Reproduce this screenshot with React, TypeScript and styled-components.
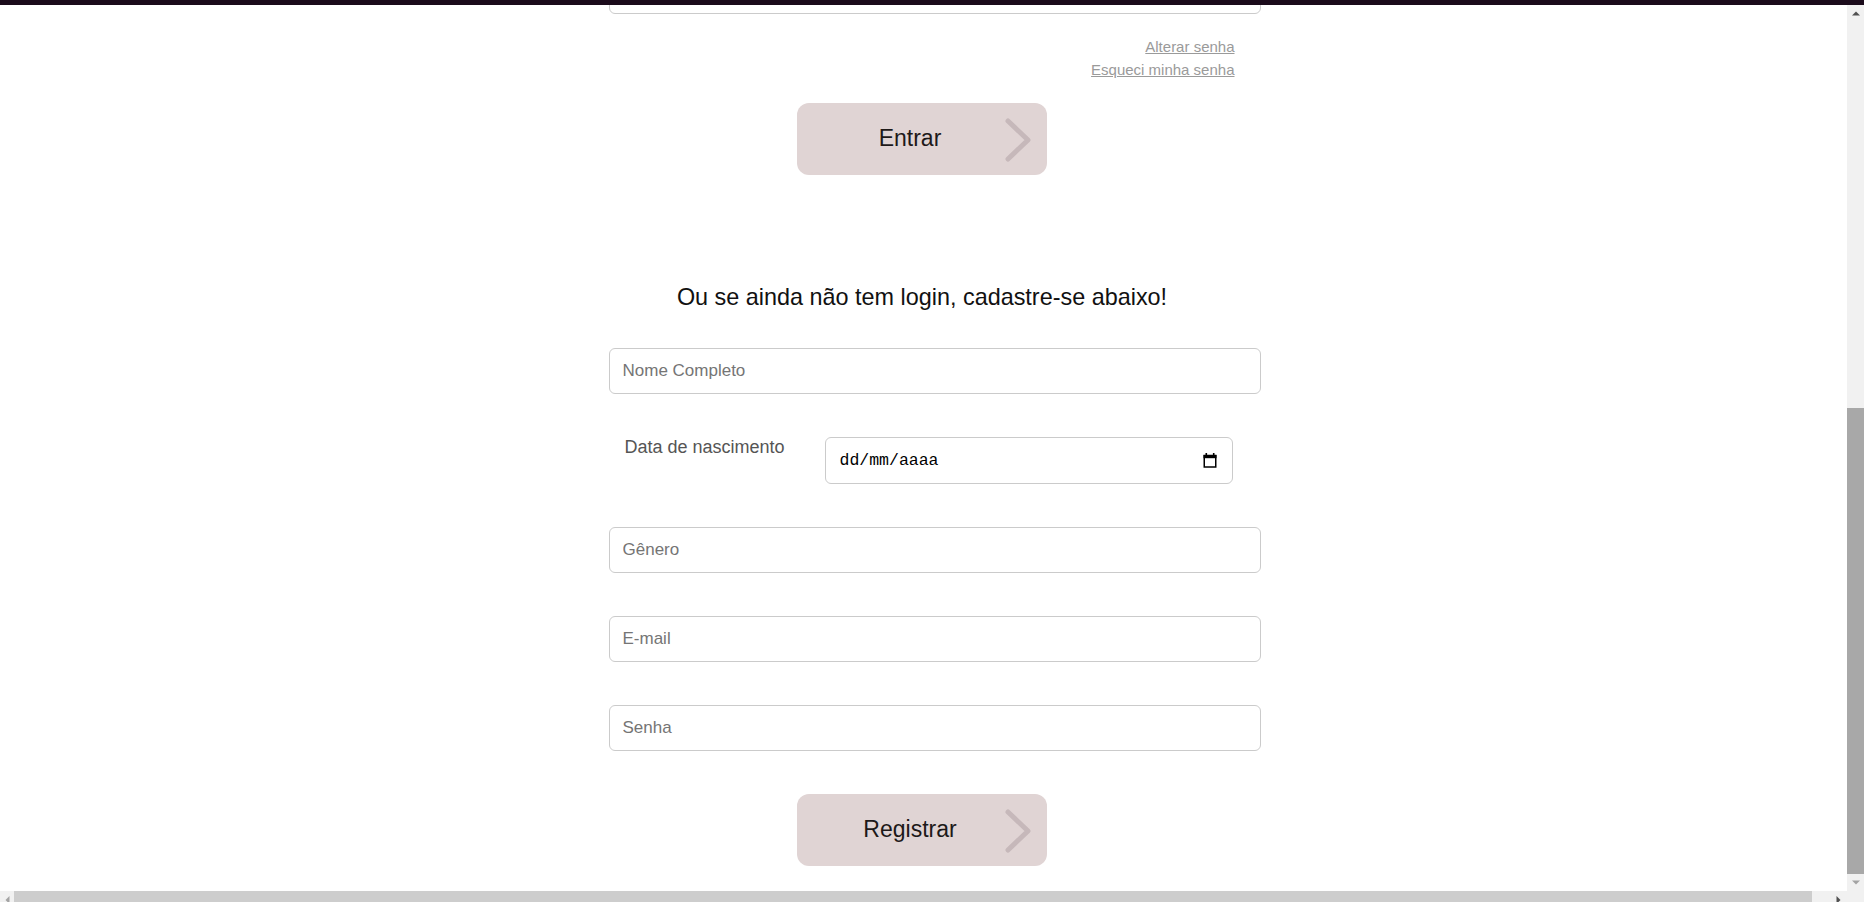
import React from "react";
import styled, { createGlobalStyle } from "styled-components";

const GlobalStyle = createGlobalStyle`
  html, body {
    margin: 0;
    padding: 0;
    height: 100%;
    overflow: hidden;
    background: #ffffff;
  }
  body {
    font-family: "Liberation Sans", Arial, sans-serif;
  }
  #root {
    height: 100%;
  }
  *, *::before, *::after {
    box-sizing: border-box;
  }
`;

const Window = styled.div`
  display: flex;
  flex-direction: column;
  width: 1864px;
  height: 902px;
  overflow: hidden;
`;

const TopStrip = styled.div`
  flex: 0 0 5px;
  background: #1b0b1b;
`;

const Middle = styled.div`
  flex: 1;
  min-height: 0;
  display: flex;
`;

const Viewport = styled.main`
  flex: 1;
  min-width: 0;
  overflow: hidden;
  display: flex;
  flex-direction: column;
  justify-content: flex-end;
  align-items: flex-start;
  background: #ffffff;
`;

const Page = styled.div`
  width: 1869px;
  flex-shrink: 0;
  display: flex;
  flex-direction: column;
  padding-bottom: 25px;
`;

const FormColumn = styled.div<{ $top?: number; $gap?: number }>`
  width: 652px;
  margin: ${(p) => p.$top ?? 0}px auto 0;
  display: flex;
  flex-direction: column;
  gap: ${(p) => p.$gap ?? 0}px;
`;

const TextInput = styled.input`
  display: block;
  width: 100%;
  height: 46px;
  margin: 0;
  padding: 0 13px;
  border: 1px solid #cbcbcb;
  border-radius: 6px;
  background: #ffffff;
  font-family: "Liberation Sans", Arial, sans-serif;
  font-size: 17px;
  color: #222;
  outline: none;

  &::placeholder {
    color: #757575;
  }
`;

const LinkStack = styled.div`
  margin-top: 21px;
  padding-right: 26px;
  display: flex;
  flex-direction: column;
  align-items: flex-end;
`;

const SmallLink = styled.a`
  font-size: 15px;
  line-height: 23px;
  color: #9a9a9a;
  text-decoration: underline;
  cursor: pointer;
`;

const ButtonRow = styled.div<{ $top: number }>`
  margin-top: ${(p) => p.$top}px;
  padding-right: 25px;
  display: flex;
  justify-content: center;
`;

const ArrowButton = styled.button`
  width: 250px;
  height: 72px;
  border: none;
  border-radius: 12px;
  background: #e0d4d4;
  padding: 0 14px 0 20px;
  display: grid;
  grid-template-columns: 1fr 30px;
  align-items: center;
  font-family: "Liberation Sans", Arial, sans-serif;
  font-size: 23px;
  color: #1d1919;
  cursor: pointer;
`;

const ButtonLabel = styled.span`
  text-align: center;
  padding-bottom: 1px;
`;

const Heading = styled.h2`
  margin: 109px 0 0;
  padding-right: 25px;
  text-align: center;
  font-size: 23.4px;
  font-weight: 400;
  line-height: 27px;
  color: #111111;
`;

const DateRow = styled.div`
  height: 47px;
  padding: 0 28px 0 16px;
  display: flex;
  align-items: flex-start;
`;

const DateLabel = styled.label`
  flex: 0 0 200px;
  font-size: 18px;
  line-height: 20px;
  color: #555555;
`;

const DateField = styled.div`
  flex: 1;
  height: 47px;
  border: 1px solid #cbcbcb;
  border-radius: 6px;
  padding: 0 15px 0 14px;
  display: flex;
  align-items: center;
  justify-content: space-between;
  font-family: "Liberation Mono", "DejaVu Sans Mono", monospace;
  font-size: 16.5px;
  color: #000000;
`;

/* ---------- scrollbars ---------- */

const VScroll = styled.div`
  flex: 0 0 17px;
  display: flex;
  flex-direction: column;
  background: #f1f1f1;
`;

const VButton = styled.div`
  flex: 0 0 17px;
  display: flex;
  align-items: center;
  justify-content: center;
`;

const VTrack = styled.div`
  flex: 1;
  display: flex;
  flex-direction: column;
  justify-content: flex-end;
`;

const VThumb = styled.div`
  height: 466px;
  background: #a8a8a8;
`;

const HBar = styled.div`
  flex: 0 0 11px;
  display: flex;
  align-items: flex-start;
  overflow: hidden;
  background: #f1f1f1;
`;

const HButton = styled.div<{ $w: number }>`
  flex: 0 0 ${(p) => p.$w}px;
  height: 17px;
  display: flex;
  align-items: center;
  justify-content: center;
`;

const HTrack = styled.div`
  flex: 1;
  height: 17px;
`;

const HThumb = styled.div`
  width: 1798px;
  height: 17px;
  background: #cdcdcd;
`;

const Corner = styled.div`
  flex: 0 0 17px;
  height: 17px;
  background: #f1f1f1;
`;

type Dir = "up" | "down" | "left" | "right";

const Tri = ({ dir, color }: { dir: Dir; color: string }) => {
  const pts: Record<Dir, string> = {
    up: "0,4.5 4,0.5 8,4.5",
    down: "0,0.5 4,4.5 8,0.5",
    left: "4.5,0 0.5,4 4.5,8",
    right: "0.5,0 4.5,4 0.5,8",
  };
  const horiz = dir === "left" || dir === "right";
  return (
    <svg width={horiz ? 5 : 8} height={horiz ? 8 : 5} viewBox={horiz ? "0 0 5 8" : "0 0 8 5"}>
      <polygon points={pts[dir]} fill={color} />
    </svg>
  );
};

const Chevron = () => (
  <svg width="30" height="48" viewBox="0 0 30 48">
    <polyline
      points="5,6 25,25 5,44"
      fill="none"
      stroke="#c6b8ba"
      strokeWidth="5"
      strokeLinecap="round"
      strokeLinejoin="round"
    />
  </svg>
);

const CalendarIcon = () => (
  <svg width="14" height="15" viewBox="0 0 14 15">
    <rect x="2.5" y="0" width="1.6" height="3" fill="#000" />
    <rect x="9.9" y="0" width="1.6" height="3" fill="#000" />
    <rect x="0.5" y="2" width="13" height="3.2" fill="#000" />
    <rect x="1.25" y="2.5" width="11.5" height="11.5" fill="none" stroke="#000" strokeWidth="1.5" />
  </svg>
);

export default function App() {
  return (
    <>
      <GlobalStyle />
      <Window>
        <TopStrip />
        <Middle>
          <Viewport>
            <Page>
              <FormColumn>
                <TextInput type="password" placeholder="Senha" />
              </FormColumn>
              <FormColumn>
                <LinkStack>
                  <SmallLink>Alterar senha</SmallLink>
                  <SmallLink>Esqueci minha senha</SmallLink>
                </LinkStack>
              </FormColumn>
              <ButtonRow $top={22}>
                <ArrowButton type="button">
                  <ButtonLabel>Entrar</ButtonLabel>
                  <Chevron />
                </ArrowButton>
              </ButtonRow>

              <Heading>Ou se ainda não tem login, cadastre-se abaixo!</Heading>

              <FormColumn $top={37} $gap={43}>
                <TextInput type="text" placeholder="Nome Completo" />
                <DateRow>
                  <DateLabel>Data de nascimento</DateLabel>
                  <DateField>
                    <span>dd/mm/aaaa</span>
                    <CalendarIcon />
                  </DateField>
                </DateRow>
                <TextInput type="text" placeholder="Gênero" />
                <TextInput type="email" placeholder="E-mail" />
                <TextInput type="password" placeholder="Senha" />
              </FormColumn>

              <ButtonRow $top={43}>
                <ArrowButton type="button">
                  <ButtonLabel>Registrar</ButtonLabel>
                  <Chevron />
                </ArrowButton>
              </ButtonRow>
            </Page>
          </Viewport>
          <VScroll>
            <VButton>
              <Tri dir="up" color="#505050" />
            </VButton>
            <VTrack>
              <VThumb />
            </VTrack>
            <VButton>
              <Tri dir="down" color="#a3a3a3" />
            </VButton>
          </VScroll>
        </Middle>
        <HBar>
          <HButton $w={14}>
            <Tri dir="left" color="#a3a3a3" />
          </HButton>
          <HTrack>
            <HThumb />
          </HTrack>
          <HButton $w={17}>
            <Tri dir="right" color="#505050" />
          </HButton>
          <Corner />
        </HBar>
      </Window>
    </>
  );
}
